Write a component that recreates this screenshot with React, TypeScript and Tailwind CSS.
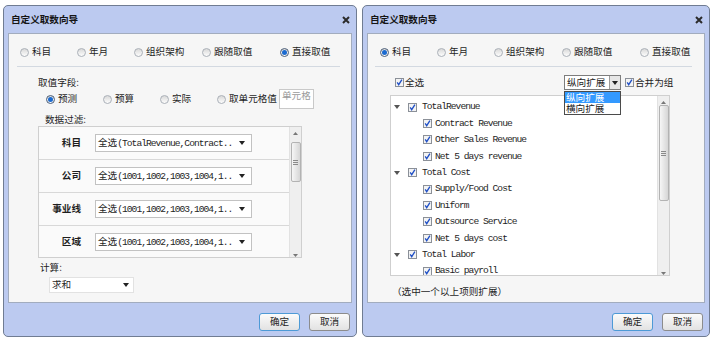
import React from 'react';

const TABS = ['科目', '年月', '组织架构', '跟随取值', '直接取值'];
const TAB_W = ['w-[57px]', 'w-[57px]', 'w-[68px]', 'w-[78px]', ''];

const FILTERS = [
  ['科目', '(TotalRevenue,Contract..'],
  ['公司', '(1001,1002,1003,1004,1..'],
  ['事业线', '(1001,1002,1003,1004,1..'],
  ['区域', '(1001,1002,1003,1004,1..'],
];

const TREE: [string, number][] = [
  ['TotalRevenue', 0],
  ['Contract Revenue', 1],
  ['Other Sales Revenue', 1],
  ['Net 5 days revenue', 1],
  ['Total Cost', 0],
  ['Supply/Food Cost', 1],
  ['Uniform', 1],
  ['Outsource Service', 1],
  ['Net 5 days cost', 1],
  ['Total Labor', 0],
  ['Basic payroll', 1],
];

const mono = "font-['Liberation_Mono','Noto_Sans_CJK_SC',monospace] tracking-[-0.96px]";

const Radio = ({ on = false }: { on?: boolean }) => (
  <span
    className={
      'flex h-[9px] w-[9px] shrink-0 items-center justify-center rounded-full border bg-linear-to-b from-[#d9d9d9] to-[#fdfdfd] ' +
      (on ? 'border-[#4a5d78]' : 'border-[#aab0b8]')
    }
  >
    {on && <span className="h-[5px] w-[5px] rounded-full bg-[#1a6ad0]" />}
  </span>
);

const Check = () => (
  <svg width="9" height="9" viewBox="0 0 9 9" className="shrink-0">
    <rect x="0.5" y="0.5" width="8" height="8" fill="#f3f3f3" stroke="#8b9098" />
    <path d="M2.2 4.4 L3.7 6.7 L6.9 1.6" fill="none" stroke="#1f4fc6" strokeWidth="1.3" />
  </svg>
);

const Caret = ({ color = '#222' }: { color?: string }) => (
  <svg width="6" height="4" viewBox="0 0 6 4" className="shrink-0">
    <path d="M0 0H6L3 4Z" fill={color} />
  </svg>
);

const CaretUp = () => (
  <svg width="5" height="3" viewBox="0 0 5 3">
    <path d="M0 3H5L2.5 0Z" fill="#777" />
  </svg>
);

const Scroll = ({ gap, thumb }: { gap: string; thumb: string }) => (
  <div className="flex w-[12px] shrink-0 flex-col items-center border-l border-[#e2e2e2] bg-[#efefef]">
    <div className={'flex w-full justify-center pt-[5px] ' + gap}>
      <CaretUp />
    </div>
    <div
      className={
        'flex w-[10px] flex-col items-center justify-center gap-[1px] rounded-[2px] border border-[#b3b3b3] bg-linear-to-r from-[#f6f6f6] to-[#d6d6d6] ' +
        thumb
      }
    >
      <span className="h-px w-[5px] bg-[#8a8a8a]" />
      <span className="h-px w-[5px] bg-[#8a8a8a]" />
      <span className="h-px w-[5px] bg-[#8a8a8a]" />
    </div>
    <div className="flex-1" />
    <div className="pb-[3px] rotate-180">
      <CaretUp />
    </div>
  </div>
);

const Tabs = ({ active, pad }: { active: number; pad: string }) => (
  <div className={'mt-[10px] flex h-[16px] items-center ' + pad}>
    {TABS.map((t, i) => (
      <span key={t} className={'flex items-center gap-[3px] ' + TAB_W[i]}>
        <Radio on={i === active} />
        <span>{t}</span>
      </span>
    ))}
  </div>
);

const Button = ({ label, focus = false }: { label: string; focus?: boolean }) => (
  <button
    className={
      'flex h-[18px] w-[41px] items-center justify-center rounded-[3px] border bg-linear-to-b from-[#fbfbfb] to-[#e2e2e2] ' +
      (focus ? 'border-[#4d9ad6]' : 'border-[#8c8c8c]')
    }
  >
    {label}
  </button>
);

const Dialog = ({ width, children }: { width: string; children: React.ReactNode }) => (
  <div className={'flex h-[332px] shrink-0 flex-col rounded-[5px] border border-[#707c92] bg-[#bccaf0] ' + width}>
    <div className="flex h-[27px] items-center justify-between pl-[7px] pr-[6px]">
      <span className="font-bold text-[#151515]">自定义取数向导</span>
      <svg width="8" height="8" viewBox="0 0 8 8">
        <path d="M1 1L7 7M7 1L1 7" stroke="#2b2b2b" strokeWidth="2" />
      </svg>
    </div>
    <div className="mx-[4px] flex h-[270px] flex-col border border-[#a2acbe] bg-[#f6f6f6]">{children}</div>
    <div className="flex flex-1 items-start justify-end gap-[9px] pr-[6px] pt-[10px]">
      <Button label="确定" focus />
      <Button label="取消" />
    </div>
  </div>
);

const LeftWizard = () => (
  <Dialog width="w-[354px]">
    <Tabs active={4} pad="pl-[11px]" />
    <div className="ml-[8px] mr-[11px] mt-[6px] h-px bg-[#d3d9e1]" />
    <div className="ml-[29px] mt-[9px] flex h-[13px] items-center">取值字段:</div>
    <div className="ml-[37px] flex h-[20px] items-center">
      {['预测', '预算', '实际'].map((t, i) => (
        <span key={t} className="flex w-[57px] items-center gap-[3px]">
          <Radio on={i === 0} />
          <span>{t}</span>
        </span>
      ))}
      <span className="flex items-center gap-[3px]">
        <Radio />
        <span>取单元格值</span>
      </span>
      <span className="ml-[2px] flex h-[20px] w-[35px] items-start border border-[#c9c9c9] bg-white pl-[2px] pt-[1px] text-[#9a9a9a]">
        单元格
      </span>
    </div>
    <div className="ml-[36px] mt-[4px] flex h-[13px] items-center">数据过滤:</div>
    <div className="ml-[29px] flex h-[132px] w-[264px] overflow-hidden border border-[#cfcfcf] bg-[#fafafa]">
      <div className="flex flex-1 flex-col">
        {FILTERS.map(([label, tail]) => (
          <div key={label} className="flex h-[33px] shrink-0 items-center border-b border-[#d8d8d8]">
            <span className="w-[42px] text-right font-bold">{label}</span>
            <span className="ml-[14px] flex h-[18px] w-[157px] items-center justify-between border border-[#c2c2c2] bg-white pl-[2px] pr-[6px]">
              <span className="whitespace-nowrap">
                全选<span className={mono}>{tail}</span>
              </span>
              <Caret />
            </span>
          </div>
        ))}
      </div>
      <Scroll gap="h-[15px]" thumb="h-[40px]" />
    </div>
    <div className="ml-[31px] mt-[3px] flex h-[13px] items-center">计算:</div>
    <div className="ml-[40px] mt-[3px] flex h-[16px] w-[85px] items-center justify-between border border-[#e2e2e2] bg-white pl-[2px] pr-[4px]">
      <span>求和</span>
      <Caret />
    </div>
  </Dialog>
);

const RightWizard = () => (
  <Dialog width="w-[348px]">
    <Tabs active={0} pad="pl-[12px]" />
    <div className="ml-[7px] mr-[12px] mt-[6px] h-px bg-[#d3d9e1]" />
    <div className="ml-[27px] mt-[8px] flex h-[15px] items-center">
      <span className="flex w-[169px] items-center gap-[1px]">
        <Check />
        <span>全选</span>
      </span>
      <div className="relative z-10 flex h-[15px] w-[57px] border border-[#7d7d7d] bg-white">
        <span className="flex flex-1 items-center pl-[2px]">纵向扩展</span>
        <span className="flex w-[11px] items-center justify-center border-l border-[#9a9a9a] bg-[#e6e6e6]">
          <Caret />
        </span>
        <div className="absolute left-[-1px] top-[15px] flex w-[57px] flex-col border border-[#4b4b4b] bg-white">
          <span className="h-[11px] bg-[#3399ff] pl-[1px] leading-[11px] text-white">纵向扩展</span>
          <span className="h-[11px] pl-[1px] leading-[11px]">横向扩展</span>
        </div>
      </div>
      <span className="ml-[4px] flex items-center gap-[1px]">
        <Check />
        <span>合并为组</span>
      </span>
    </div>
    <div className="ml-[22px] mt-[5px] flex h-[181px] w-[280px] overflow-hidden border border-[#cfcfcf] bg-white">
      <div className="flex flex-1 flex-col pt-[3px]">
        {TREE.map(([name, lvl]) => (
          <div key={name} className={'flex h-[16.4px] shrink-0 items-center ' + (lvl ? 'pl-[32px]' : 'pl-[3px]')}>
            {lvl === 0 && (
              <span className="mr-[8px]">
                <Caret color="#555" />
              </span>
            )}
            <Check />
            <span className={'whitespace-nowrap ' + mono + (lvl ? ' ml-[3px]' : ' ml-[5px]')}>{name}</span>
          </div>
        ))}
      </div>
      <Scroll gap="h-[9px]" thumb="h-[96px]" />
    </div>
    <div className="ml-[24px] mt-[9px] flex h-[14px] items-center">（选中一个以上项则扩展）</div>
  </Dialog>
);

export default function App() {
  return (
    <div className="flex h-[340px] w-[713px] gap-[5px] bg-white pl-[3px] pt-[5px] font-['Noto_Sans_CJK_SC',sans-serif] text-[9.6px] leading-none text-[#1e1e1e]">
      <LeftWizard />
      <RightWizard />
    </div>
  );
}
